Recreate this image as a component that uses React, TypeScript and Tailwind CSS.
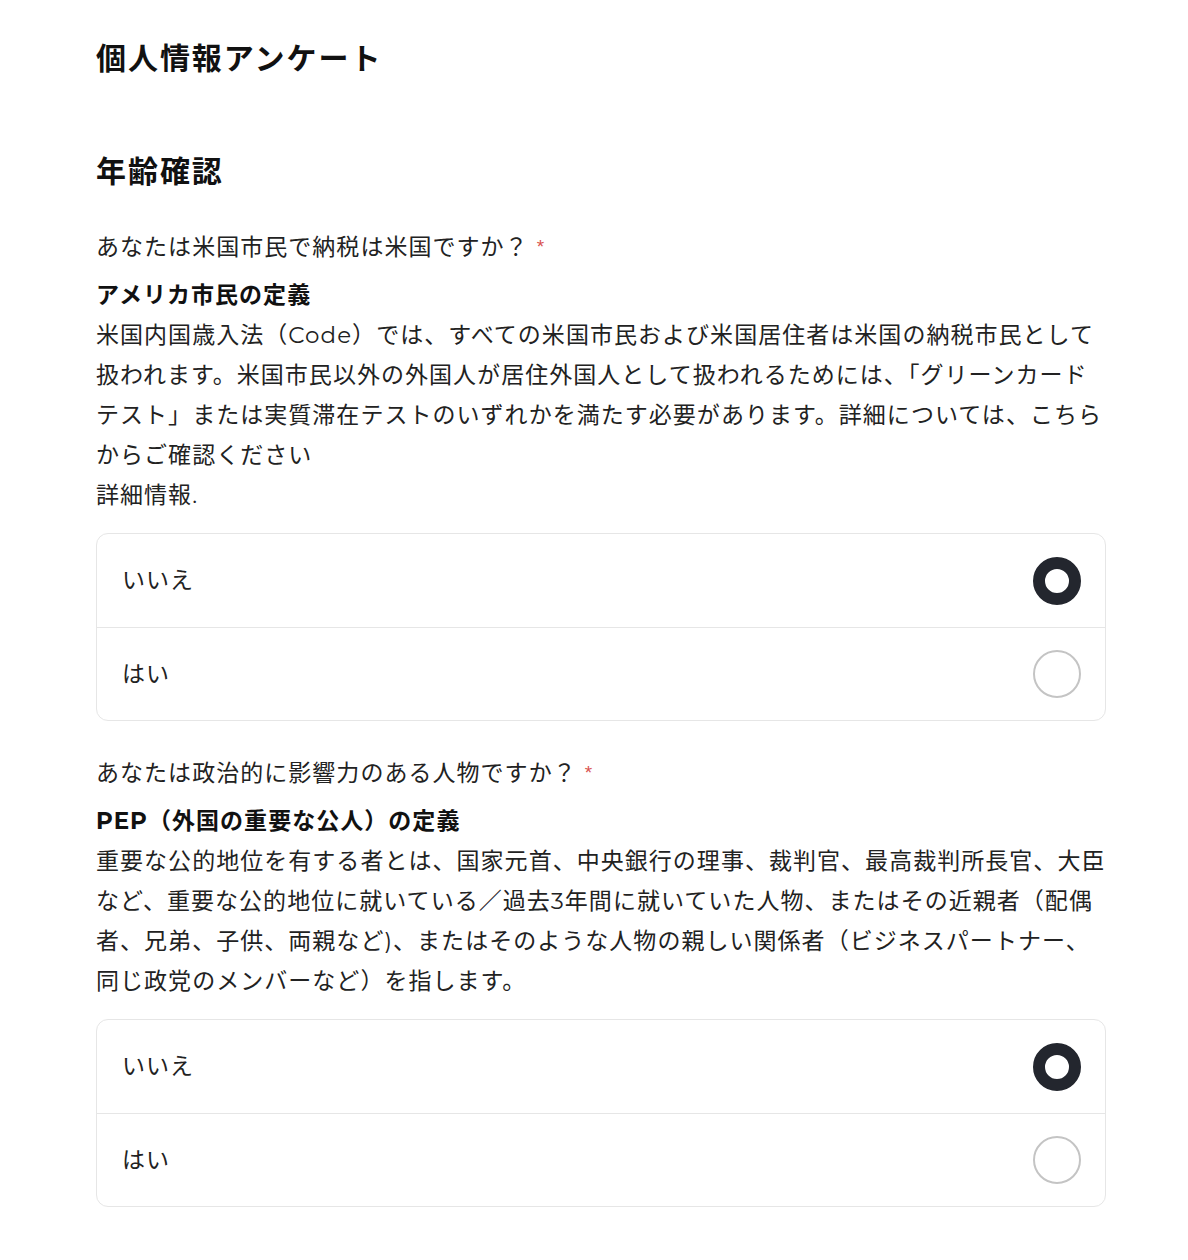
import { useState } from 'react'

const FONT = "font-['Montserrat','Noto_Sans_CJK_JP','Noto_Sans',sans-serif]"

interface Question {
  id: string
  label: string
  heading: string
  // lines as they wrap in the design
  body: string[]
}

const QUESTIONS: Question[] = [
  {
    id: 'us',
    label: 'あなたは米国市民で納税は米国ですか？',
    heading: 'アメリカ市民の定義',
    body: [
      '米国内国歳入法（Code）では、すべての米国市民および米国居住者は米国の納税市民として',
      '扱われます。米国市民以外の外国人が居住外国人として扱われるためには、「グリーンカード',
      'テスト」または実質滞在テストのいずれかを満たす必要があります。詳細については、こちら',
      'からご確認ください',
      '詳細情報.',
    ],
  },
  {
    id: 'pep',
    label: 'あなたは政治的に影響力のある人物ですか？',
    heading: 'PEP（外国の重要な公人）の定義',
    body: [
      '重要な公的地位を有する者とは、国家元首、中央銀行の理事、裁判官、最高裁判所長官、大臣',
      'など、重要な公的地位に就いている／過去3年間に就いていた人物、またはその近親者（配偶',
      '者、兄弟、子供、両親など)、またはそのような人物の親しい関係者（ビジネスパートナー、',
      '同じ政党のメンバーなど）を指します。',
    ],
  },
]

function Radio({ checked }: { checked: boolean }) {
  return checked ? (
    <span className="block h-12 w-12 shrink-0 rounded-full border-[12px] border-[#23262e] bg-white" />
  ) : (
    <span className="block h-12 w-12 shrink-0 rounded-full border-2 border-[#c4c4c4] bg-white" />
  )
}

function QuestionBlock({ q }: { q: Question }) {
  const [value, setValue] = useState<'no' | 'yes'>('no')
  const options: { key: 'no' | 'yes'; label: string }[] = [
    { key: 'no', label: 'いいえ' },
    { key: 'yes', label: 'はい' },
  ]

  return (
    <div>
      <p className="h-[40px] whitespace-nowrap text-[23px] leading-[40px] tracking-[0.045em] text-[#222]">
        {q.label}
        <span className="relative -top-[2px] ml-[8px] align-middle font-['Liberation_Sans',sans-serif] text-[19px] leading-none text-[#d9534f]">
          *
        </span>
      </p>
      <h3 className="mt-[8px] h-[40px] whitespace-nowrap text-[23px] font-bold leading-[40px] tracking-[0.045em] text-[#111]">
        {q.heading}
      </h3>
      <div className="text-[23px] leading-[40px] tracking-[0.045em] text-[#222]">
        {q.body.map((line, i) => (
          <p key={i} className="h-[40px] whitespace-nowrap">
            {line}
          </p>
        ))}
      </div>
      <div className="mt-[18px] overflow-hidden rounded-xl border border-[#e6e6e6] bg-white">
        {options.map((opt, i) => (
          <button
            key={opt.key}
            onClick={() => setValue(opt.key)}
            className={`flex h-[93px] w-full items-center justify-between pl-[25px] pr-[24px] text-left ${i > 0 ? 'border-t border-[#e6e6e6]' : ''}`}
          >
            <span className="text-[23px] tracking-[0.045em] text-[#222]">{opt.label}</span>
            <Radio checked={value === opt.key} />
          </button>
        ))}
      </div>
    </div>
  )
}

export default function App() {
  return (
    <div className={`min-h-screen bg-white ${FONT}`}>
      <div className="ml-[96px] w-[1010px] pb-[52px] pt-[37px]">
        <h1 className="text-[30px] font-bold leading-[44px] tracking-[0.065em] text-[#111]">個人情報アンケート</h1>
        <h2 className="mt-[69px] text-[30px] font-bold leading-[44px] tracking-[0.065em] text-[#111]">年齢確認</h2>
        <div className="mt-[33px] flex flex-col gap-[32px]">
          {QUESTIONS.map((q) => (
            <QuestionBlock key={q.id} q={q} />
          ))}
        </div>
      </div>
    </div>
  )
}
